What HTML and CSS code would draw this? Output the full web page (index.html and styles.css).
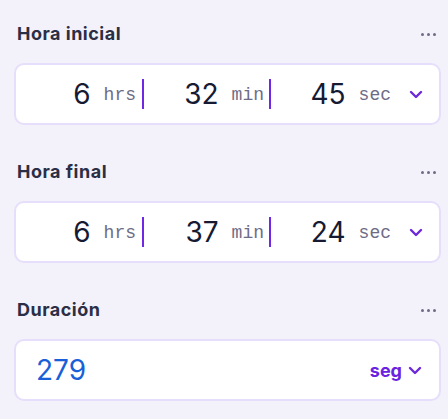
FILE: index.html
```html
<!DOCTYPE html>
<html>
<head>
  <title>Duración</title>
  <link rel="stylesheet" href="styles.css">
</head>
<body>
  <div class="panel">
    <div class="field">
      <div class="field-head">
        <span class="field-label">Hora inicial</span>
        <span class="more"><i></i><i></i><i></i></span>
      </div>
      <div class="box">
        <div class="seg seg-h"><span class="num">6</span><span class="unit">hrs</span></div>
        <span class="sep"></span>
        <div class="seg seg-m"><span class="num">32</span><span class="unit">min</span></div>
        <span class="sep"></span>
        <div class="seg seg-s"><span class="num">45</span><span class="unit">sec</span></div>
        <svg class="chev" width="14" height="9" viewBox="0 0 14 9"><path d="M2 2l5 5 5-5" fill="none" stroke="#6d28d9" stroke-width="2.4" stroke-linecap="round" stroke-linejoin="round"/></svg>
      </div>
    </div>

    <div class="field">
      <div class="field-head">
        <span class="field-label">Hora final</span>
        <span class="more"><i></i><i></i><i></i></span>
      </div>
      <div class="box">
        <div class="seg seg-h"><span class="num">6</span><span class="unit">hrs</span></div>
        <span class="sep"></span>
        <div class="seg seg-m"><span class="num">37</span><span class="unit">min</span></div>
        <span class="sep"></span>
        <div class="seg seg-s"><span class="num">24</span><span class="unit">sec</span></div>
        <svg class="chev" width="14" height="9" viewBox="0 0 14 9"><path d="M2 2l5 5 5-5" fill="none" stroke="#6d28d9" stroke-width="2.4" stroke-linecap="round" stroke-linejoin="round"/></svg>
      </div>
    </div>

    <div class="field">
      <div class="field-head">
        <span class="field-label">Duración</span>
        <span class="more"><i></i><i></i><i></i></span>
      </div>
      <div class="box box-total">
        <span class="total">279</span>
        <span class="total-unit">seg</span>
        <svg class="chev chev-total" width="14" height="9" viewBox="0 0 14 9"><path d="M2 2l5 5 5-5" fill="none" stroke="#6d28d9" stroke-width="2.4" stroke-linecap="round" stroke-linejoin="round"/></svg>
      </div>
    </div>
  </div>
</body>
</html>
```

FILE: styles.css
```css
body {
  margin: 0;
  background-color: #f3f2fa;
  font-family: Inter, "Noto Sans", sans-serif;
}

.panel {
  padding: 0 7px 0 14px;
}

.field {
  height: 138px;
}

.field-head {
  height: 63px;
  display: flex;
  align-items: center;
  justify-content: space-between;
  padding: 4px 5px 0 3px;
  box-sizing: border-box;
}

.field-label {
  font-size: 18px;
  font-weight: 700;
  letter-spacing: 0.5px;
  color: #2b2e45;
}

.more {
  display: flex;
  gap: 3px;
  margin-top: 2px;
}

.more i {
  width: 3px;
  height: 3px;
  border-radius: 50%;
  background-color: #6e6c85;
}

.box {
  height: 62px;
  display: flex;
  align-items: center;
  background-color: #fff;
  border: 2px solid #e6defb;
  border-radius: 10px;
  box-sizing: border-box;
}

.seg {
  display: flex;
  align-items: center;
  justify-content: flex-end;
  gap: 13px;
  box-sizing: border-box;
}

.seg-h {
  width: 126px;
  padding-right: 6px;
}

.seg-m {
  width: 125px;
  padding-right: 5px;
}

.seg-s {
  width: 125px;
  padding-right: 5px;
}

.num {
  font-size: 28px;
  color: #161a33;
  line-height: 1;
}

.unit {
  font-family: "Liberation Mono", "DejaVu Sans Mono", monospace;
  font-size: 18px;
  color: #6e6c85;
  margin-top: 2px;
}

.sep {
  width: 2px;
  height: 30px;
  background-color: #7028e4;
}

.chev {
  margin-left: 13px;
}

.box-total {
  padding: 0 17px 0 20px;
}

.total {
  font-size: 28px;
  color: #1760d8;
  flex: 1;
}

.total-unit {
  font-size: 18px;
  font-weight: 700;
  color: #6a22e0;
}

.chev-total {
  margin-left: 6px;
}
```
